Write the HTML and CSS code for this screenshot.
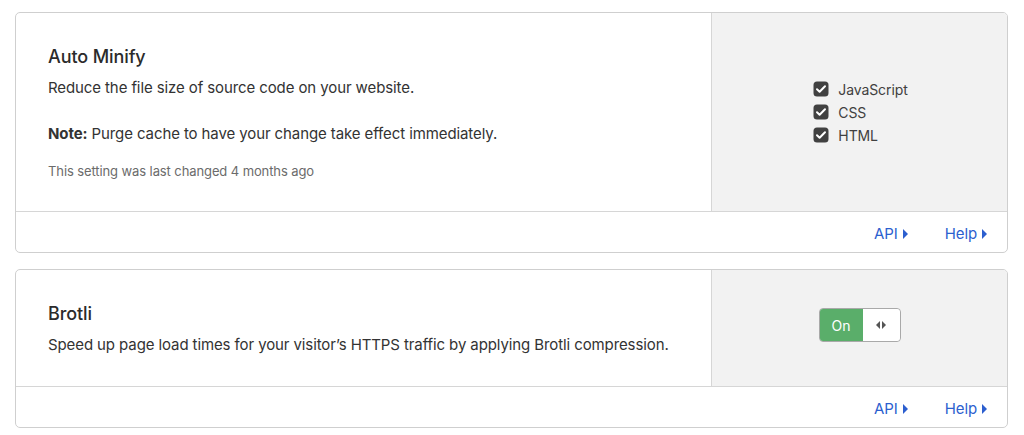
FILE: index.html
```html
<!DOCTYPE html>
<html lang="en">
<head>
<meta charset="utf-8">
<title>Settings</title>
<link rel="stylesheet" href="styles.css">
</head>
<body>
<div class="page">
  <section class="card">
    <div class="card-main">
      <div class="card-info">
        <h3 class="card-title">Auto Minify</h3>
        <p class="card-desc">Reduce the file size of source code on your website.</p>
        <p class="card-desc note"><strong>Note:</strong> Purge cache to have your change take effect immediately.</p>
        <p class="card-meta">This setting was last changed 4 months ago</p>
      </div>
      <div class="card-control">
        <ul class="checks">
          <li class="check"><span class="box"><svg viewBox="0 0 16 16" width="16" height="16"><rect x="0.5" y="0.5" width="15" height="15" rx="3.5" fill="#414141"/><path d="M4 8.3l2.6 2.5L12 5.3" fill="none" stroke="#fff" stroke-width="2" stroke-linecap="round" stroke-linejoin="round"/></svg></span>JavaScript</li>
          <li class="check"><span class="box"><svg viewBox="0 0 16 16" width="16" height="16"><rect x="0.5" y="0.5" width="15" height="15" rx="3.5" fill="#414141"/><path d="M4 8.3l2.6 2.5L12 5.3" fill="none" stroke="#fff" stroke-width="2" stroke-linecap="round" stroke-linejoin="round"/></svg></span>CSS</li>
          <li class="check"><span class="box"><svg viewBox="0 0 16 16" width="16" height="16"><rect x="0.5" y="0.5" width="15" height="15" rx="3.5" fill="#414141"/><path d="M4 8.3l2.6 2.5L12 5.3" fill="none" stroke="#fff" stroke-width="2" stroke-linecap="round" stroke-linejoin="round"/></svg></span>HTML</li>
        </ul>
      </div>
    </div>
    <div class="card-footer">
      <a class="link" href="#">API<span class="caret"></span></a>
      <a class="link" href="#">Help<span class="caret"></span></a>
    </div>
  </section>

  <section class="card">
    <div class="card-main">
      <div class="card-info">
        <h3 class="card-title">Brotli</h3>
        <p class="card-desc">Speed up page load times for your visitor’s HTTPS traffic by applying Brotli compression.</p>
      </div>
      <div class="card-control">
        <div class="toggle">
          <span class="toggle-on">On</span>
          <span class="toggle-knob"><span class="tri tri-l"></span><span class="tri tri-r"></span></span>
        </div>
      </div>
    </div>
    <div class="card-footer">
      <a class="link" href="#">API<span class="caret"></span></a>
      <a class="link" href="#">Help<span class="caret"></span></a>
    </div>
  </section>
</div>
</body>
</html>
```

FILE: styles.css
```css
* { box-sizing: border-box; }
html, body { margin: 0; padding: 0; background: #fff; }
body {
  font-family: Inter, "Liberation Sans", Arial, sans-serif;
  color: #333;
  letter-spacing: -0.1px;
  -webkit-font-smoothing: antialiased;
}
.page {
  padding: 12px 16px 0 15px;
  display: flex;
  flex-direction: column;
  gap: 16px;
}
.card {
  border: 1px solid #cfcfcf;
  border-radius: 5px;
  overflow: hidden;
  background: #fff;
}
.card-main {
  display: flex;
  border-bottom: 1px solid #d6d6d6;
}
.card-info {
  flex: 1;
  padding: 32px 32px 30px 32px;
}
.card-brotli { padding-bottom: 31px; }
.card-title {
  margin: 0 0 8px;
  font-size: 18px;
  line-height: 24px;
  font-weight: 500;
  color: #2b2b2b;
}
.card-desc {
  margin: 0;
  font-size: 15px;
  line-height: 22px;
  color: #333;
}
.card-desc strong { font-weight: 700; }
.note { margin-top: 24px; }
.card-meta {
  margin: 16px 0 0;
  font-size: 13px;
  line-height: 20px;
  color: #6b6b6b;
}
.card-control {
  width: 296px;
  flex: none;
  background: #f2f2f2;
  border-left: 1px solid #d6d6d6;
  display: flex;
  align-items: center;
  justify-content: center;
}
.checks {
  list-style: none;
  margin: 0;
  padding: 0 0 0 2px;
}
.check {
  display: flex;
  align-items: center;
  gap: 9px;
  font-size: 14px;
  line-height: 23px;
  color: #404040;
}
.box { display: flex; width: 16px; height: 16px; }
.card-footer {
  height: 40px;
  display: flex;
  align-items: center;
  justify-content: flex-end;
  gap: 37px;
  padding: 3px 20px 0 0;
}
.link {
  color: #2c5fcf;
  text-decoration: none;
  font-size: 15px;
  line-height: 20px;
  display: inline-flex;
  align-items: center;
}
.caret {
  display: inline-block;
  width: 0; height: 0;
  margin-left: 5px;
  border-top: 5px solid transparent;
  border-bottom: 5px solid transparent;
  border-left: 5px solid #2c5fcf;
}
.toggle {
  display: flex;
  height: 34px;
  width: 82px;
  border: 1px solid #a9a9a9;
  border-radius: 4px;
  overflow: hidden;
  margin-top: -6px;
}
.toggle-on {
  width: 43px;
  background: #5aae6a;
  color: #fff;
  font-size: 14px;
  display: flex;
  align-items: center;
  justify-content: center;
}
.toggle-knob {
  flex: 1;
  background: #fff;
  display: flex;
  align-items: center;
  justify-content: center;
  gap: 2px;
  border-radius: 0 3px 3px 0;
}
.tri { width: 0; height: 0; border-top: 4px solid transparent; border-bottom: 4px solid transparent; }
.tri-l { border-right: 4px solid #555; }
.tri-r { border-left: 4px solid #555; }
```
